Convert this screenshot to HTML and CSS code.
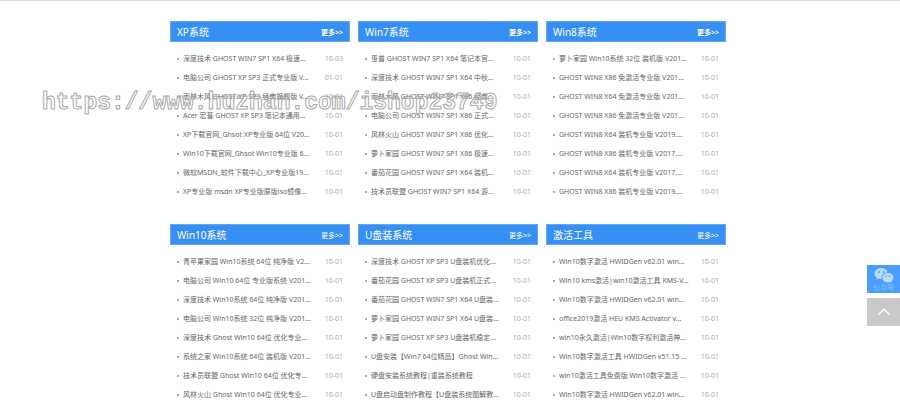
FILE: index.html
```html
<!DOCTYPE html>
<html lang="zh-CN">
<head>
    <meta charset="UTF-8">
    <meta name="viewport" content="width=device-width, initial-scale=1.0">
    <title>系统下载</title>
    <link rel="stylesheet" href="styles.css">
</head>
<body>
    <main class="container">
        <section class="box">
            <div class="box-head"><h2>XP系统</h2><a class="more bold" href="#">更多&gt;&gt;</a></div>
            <ul>
                <li><a href="#">深度技术 GHOST WIN7 SP1 X64 极速...</a><span>10-03</span></li>
                <li><a href="#">电脑公司 GHOST XP SP3 正式专业版 V...</a><span>01-01</span></li>
                <li><a href="#">雨林木风 GHOST XP SP3 经典旗舰版 V...</a><span>10-01</span></li>
                <li><a href="#">Acer 宏碁 GHOST XP SP3 笔记本通用...</a><span>10-01</span></li>
                <li><a href="#">XP下载官网_Ghsot XP专业版 64位 V20...</a><span>10-01</span></li>
                <li><a href="#">Win10下载官网_Ghsot Win10专业版 6...</a><span>10-01</span></li>
                <li><a href="#">微软MSDN_软件下载中心_XP专业版19...</a><span>10-01</span></li>
                <li><a href="#">XP专业版 msdn XP专业版原版iso镜像...</a><span>10-01</span></li>
            </ul>
        </section>
        <section class="box">
            <div class="box-head"><h2>Win7系统</h2><a class="more bold" href="#">更多&gt;&gt;</a></div>
            <ul>
                <li><a href="#">惠普 GHOST WIN7 SP1 X64 笔记本官...</a><span>10-01</span></li>
                <li><a href="#">深度技术 GHOST WIN7 SP1 X64 中秋...</a><span>10-01</span></li>
                <li><a href="#">雨林木风 GHOST WIN7 SP1 X86 经典...</a><span>10-01</span></li>
                <li><a href="#">电脑公司 GHOST WIN7 SP1 X86 正式...</a><span>10-01</span></li>
                <li><a href="#">风林火山 GHOST WIN7 SP1 X86 优化...</a><span>10-01</span></li>
                <li><a href="#">萝卜家园 GHOST WIN7 SP1 X86 极速...</a><span>10-01</span></li>
                <li><a href="#">番茄花园 GHOST WIN7 SP1 X64 装机...</a><span>10-01</span></li>
                <li><a href="#">技术员联盟 GHOST WIN7 SP1 X64 游...</a><span>10-01</span></li>
            </ul>
        </section>
        <section class="box">
            <div class="box-head"><h2>Win8系统</h2><a class="more bold" href="#">更多&gt;&gt;</a></div>
            <ul>
                <li><a href="#">萝卜家园 Win10系统 32位 装机版 V201...</a><span>10-01</span></li>
                <li><a href="#">GHOST WIN8 X86 免激活专业版 V201...</a><span>10-01</span></li>
                <li><a href="#">GHOST WIN8 X64 免激活专业版 V201...</a><span>10-01</span></li>
                <li><a href="#">GHOST WIN8 X86 免激活专业版 V201...</a><span>10-01</span></li>
                <li><a href="#">GHOST WIN8 X64 装机专业版 V2019....</a><span>10-01</span></li>
                <li><a href="#">GHOST WIN8 X86 装机专业版 V2017....</a><span>10-01</span></li>
                <li><a href="#">GHOST WIN8 X64 装机专业版 V2017....</a><span>10-01</span></li>
                <li><a href="#">GHOST WIN8 X86 装机专业版 V2019....</a><span>10-01</span></li>
            </ul>
        </section>
        <section class="box">
            <div class="box-head"><h2>Win10系统</h2><a class="more" href="#">更多&gt;&gt;</a></div>
            <ul>
                <li><a href="#">青苹果家园 Win10系统 64位 纯净版 V2...</a><span>10-01</span></li>
                <li><a href="#">电脑公司 Win10 64位 专业版系统 V201...</a><span>10-01</span></li>
                <li><a href="#">深度技术 Win10系统 64位 纯净版 V201...</a><span>10-01</span></li>
                <li><a href="#">电脑公司 Win10系统 32位 纯净版 V201...</a><span>10-01</span></li>
                <li><a href="#">深度技术 Ghost Win10 64位 优化专业...</a><span>10-01</span></li>
                <li><a href="#">系统之家 Win10系统 64位 装机版 V201...</a><span>10-01</span></li>
                <li><a href="#">技术员联盟 Ghost Win10 64位 优化专...</a><span>10-01</span></li>
                <li><a href="#">风林火山 Ghost Win10 64位 优化专业...</a><span>10-01</span></li>
            </ul>
        </section>
        <section class="box">
            <div class="box-head"><h2>U盘装系统</h2><a class="more" href="#">更多&gt;&gt;</a></div>
            <ul>
                <li><a href="#">深度技术 GHOST XP SP3 U盘装机优化...</a><span>10-01</span></li>
                <li><a href="#">番茄花园 GHOST XP SP3 U盘装机正式...</a><span>10-01</span></li>
                <li><a href="#">番茄花园 GHOST WIN7 SP1 X64 U盘装...</a><span>10-01</span></li>
                <li><a href="#">萝卜家园 GHOST WIN7 SP1 X64 U盘装...</a><span>10-01</span></li>
                <li><a href="#">萝卜家园 GHOST XP SP3 U盘装机稳定...</a><span>10-01</span></li>
                <li><a href="#">U盘安装【Win7 64位精品】Ghost Win...</a><span>10-01</span></li>
                <li><a href="#">硬盘安装系统教程|重装系统教程</a><span>10-01</span></li>
                <li><a href="#">U盘启动盘制作教程【U盘装系统图解教...</a><span>10-01</span></li>
            </ul>
        </section>
        <section class="box">
            <div class="box-head"><h2>激活工具</h2><a class="more" href="#">更多&gt;&gt;</a></div>
            <ul>
                <li><a href="#">Win10数字激活 HWIDGen v62.01 win...</a><span>10-01</span></li>
                <li><a href="#">Win10 kms激活|win10激活工具 KMS-V...</a><span>10-01</span></li>
                <li><a href="#">Win10数字激活 HWIDGen v62.01 win...</a><span>10-01</span></li>
                <li><a href="#">office2019激活 HEU KMS Activator v...</a><span>10-01</span></li>
                <li><a href="#">win10永久激活|Win10数字权利激活神...</a><span>10-01</span></li>
                <li><a href="#">Win10数字激活工具 HWIDGen v51.15 ...</a><span>10-01</span></li>
                <li><a href="#">win10激活工具免费版 Win10数字激活 ...</a><span>10-01</span></li>
                <li><a href="#">Win10数字激活 HWIDGen v62.01 win...</a><span>10-01</span></li>
            </ul>
        </section>
    </main>

    <div class="watermark">https://www.huzhan.com/ishop23749</div>

    <div class="side-bar">
        <a class="wechat" href="#">
            <svg width="20" height="17" viewBox="0 0 20 17">
                <path fill="#b9dbff" d="M7.2 1C3.500 1 .6 3.400 .6 6.500c0 1.800 1 3.300 2.500 4.300l-.6 2 2.300-1.200c.8.2 1.600.3 2.400.3h.5C7 7.700 9.700 5.400 13.300 5.400h.4C13 2.800 10.400 1 7.200 1z"/>
                <path fill="#b9dbff" d="M19.500 10.700c0-2.600-2.600-4.600-5.600-4.600s-5.600 2-5.600 4.600 2.500 4.700 5.600 4.700c.7 0 1.300-.1 1.900-.3l1.900 1-.5-1.700c1.400-.9 2.300-2.200 2.300-3.700z"/>
                <g fill="#4a9dfb">
                    <circle cx="5" cy="5" r="1"/>
                    <circle cx="9.500" cy="5" r="1"/>
                    <circle cx="12" cy="9.300" r=".8"/>
                    <circle cx="15.800" cy="9.300" r=".8"/>
                </g>
            </svg>
            <span>公众号</span>
        </a>
        <button class="to-top" type="button" aria-label="返回顶部">
            <svg width="14" height="10" viewBox="0 0 14 10">
                <path d="M1.500 7.500 7 2.200l5.500 5.300" fill="none" stroke="#fff" stroke-width="1.300"/>
            </svg>
        </button>
    </div>
</body>
</html>
```
FILE: styles.css
```css
* {
    box-sizing: border-box;
    margin: 0;
    padding: 0;
}
body {
    font-family: "Noto Sans", "Noto Sans CJK SC", sans-serif;
    font-size: 7px;
    color: #666;
    background: #fff;
    border-top: 1px solid #ddd;
    padding: 20px 4px 0 0;
}
a {
    color: inherit;
    text-decoration: none;
}
.container {
    display: grid;
    grid-template-columns: repeat(3, 1fr);
    gap: 23px 8px;
    max-width: 556px;
    margin: 0 auto;
}
.box-head {
    display: flex;
    align-items: center;
    justify-content: space-between;
    height: 21px;
    padding: 0 6px;
    background: #368ff2;
    border: 1px solid #62a8f6;
    color: #fff;
}
.box-head h2 {
    font-size: 10px;
    font-weight: 400;
}
.bold {
    font-weight: 700;
}
.box ul {
    list-style: none;
    padding: 7px 7px 0;
}
.box li {
    display: flex;
    align-items: center;
    height: 19px;
    line-height: 19px;
    white-space: nowrap;
}
.box li::before {
    content: "";
    width: 2px;
    height: 2px;
    margin-right: 4px;
    background: #aaa;
}
.box li span {
    margin-left: auto;
    color: #aaa;
}
.watermark {
    position: absolute;
    top: 89px;
    left: 42px;
    font-family: "Liberation Mono", monospace;
    font-size: 23px;
    font-weight: 700;
    line-height: 28px;
    color: transparent;
    -webkit-text-stroke: 1px #aaa;
    pointer-events: none;
}
.side-bar {
    position: fixed;
    top: 265px;
    right: 0;
    width: 33px;
}
.wechat {
    display: flex;
    flex-direction: column;
    align-items: center;
    height: 28px;
    padding-top: 2px;
    background: #4a9dfb;
    color: #8cc3ff;
    line-height: 8px;
}
.to-top {
    display: flex;
    align-items: center;
    justify-content: center;
    width: 100%;
    height: 28px;
    margin-top: 5px;
    border: none;
    background: #c9c9c9;
    cursor: pointer;
}
```
